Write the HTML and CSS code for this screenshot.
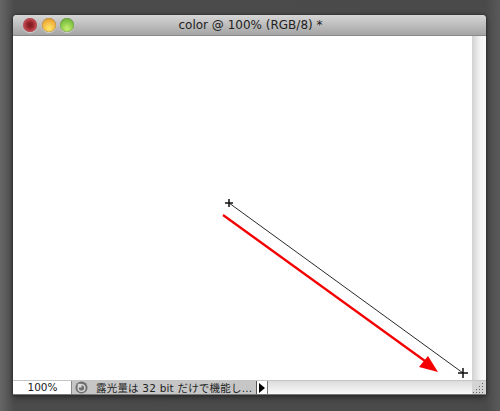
FILE: index.html
```html
<!DOCTYPE html>
<html lang="ja">
<head>
    <meta charset="UTF-8">
    <meta name="viewport" content="width=device-width, initial-scale=1.0">
    <title>color @ 100% (RGB/8) *</title>
    <link rel="stylesheet" href="styles.css">
</head>
<body>

<div class="window">
    <div class="titlebar">
        <div class="lights">
            <span class="light red"></span>
            <span class="light yellow"></span>
            <span class="light green"></span>
        </div>
        <div class="title">color @ 100% (RGB/8) *</div>
    </div>

    <div class="main">
        <svg class="canvas" width="459" height="344" viewBox="13 36 459 344">
            <!-- thin path with the two cursors -->
            <line x1="229" y1="203" x2="463" y2="373" stroke="#111" stroke-width="0.9"/>
            <path d="M229 199V207M225 203H233" stroke="#111" stroke-width="1.5" fill="none"/>
            <path d="M463 368V378M458 373H468" stroke="#111" stroke-width="1.5" fill="none"/>
            <!-- red arrow -->
            <line x1="223" y1="215" x2="425" y2="361" stroke="#f40000" stroke-width="2.2"/>
            <polygon points="438,372 419,367 428,356" fill="#f40000"/>
        </svg>
        <div class="scroll-strip"></div>
    </div>

    <div class="statusbar">
        <div class="zoom">100%</div>
        <div class="info">
            <svg class="info-icon" width="14" height="14" viewBox="0 0 14 14">
                <circle cx="7" cy="7" r="6.5" fill="#6f6f6f"/>
                <circle cx="7" cy="7.5" r="3.6" fill="none" stroke="#d8d8d8" stroke-width="1.5"/>
                <path d="M3 3H7V7H3z" fill="#d8d8d8"/>
            </svg>
            <span class="info-text">露光量は 32 bit だけで機能し...</span>
        </div>
        <div class="arrow-btn"><span class="arrow"></span></div>
        <div class="hscroll"></div>
        <svg class="grip" width="14" height="13" viewBox="0 0 14 13">
            <path d="M10 2h1v1h-1zM7 5h1v1h-1zM10 5h1v1h-1zM4 8h1v1h-1zM7 8h1v1h-1zM10 8h1v1h-1zM1 11h1v1h-1zM4 11h1v1h-1zM7 11h1v1h-1zM10 11h1v1h-1z" fill="#666"/>
        </svg>
    </div>
</div>

</body>
</html>
```

FILE: styles.css
```css
html, body {
    margin: 0;
    height: 100%;
}

body {
    width: 500px;
    height: 411px;
    overflow: hidden;
    padding: 15px 14px 0 13px;
    box-sizing: border-box;
    background: linear-gradient(to right, #666 0, #4b4b4b 14px, #4a4a4a 486px, #5a5a5a 500px);
    font-family: "DejaVu Sans", "Noto Sans CJK JP", sans-serif;
}

.window {
    width: 473px;
    height: 380px;
    display: flex;
    flex-direction: column;
    box-shadow: 0 0 3px #222, 0 3px 6px rgba(0, 0, 0, 0.35);
    border-radius: 4px 4px 0 0;
    background: #fff;
}

.titlebar {
    height: 20px;
    flex: none;
    display: flex;
    align-items: center;
    border-radius: 4px 4px 0 0;
    background: linear-gradient(to bottom, #d6d6d6, #a4a4a4);
    border-bottom: 1px solid #8a8a8a;
}

.lights {
    display: flex;
    gap: 4.5px;
    padding-left: 10px;
}

.light {
    width: 14px;
    height: 14px;
    border-radius: 50%;
    box-shadow: 0 1px 1px rgba(255, 255, 255, 0.5), inset 0 0 1px rgba(0, 0, 0, 0.5);
}

.red {
    background: radial-gradient(circle at 50% 50%, #7e1a20 0, #93242c 30%, #ea666c 85%);
}

.yellow {
    background: radial-gradient(circle at 50% 75%, #ffe868 0, #f2b440 55%, #cf8e2e 100%);
}

.green {
    background: radial-gradient(circle at 50% 75%, #c8ee70 0, #86c648 55%, #60a036 100%);
}

.title {
    flex: 1;
    padding-right: 59px;
    text-align: center;
    font-size: 12px;
    color: #222;
}

.main {
    flex: 1;
    display: flex;
    min-height: 0;
}

.canvas {
    display: block;
    flex: none;
}

.scroll-strip {
    flex: 1;
    background: linear-gradient(to right, #d2d2d2, #f4f4f4 60%, #fafafa);
}

.statusbar {
    height: 15px;
    flex: none;
    display: flex;
    font-size: 10.5px;
    color: #222;
    border-top: 1px solid #c4c4c4;
    border-bottom: 1px solid #777;
    box-sizing: border-box;
    background: #fff;
}

.zoom {
    width: 59px;
    padding-left: 1px;
    text-align: center;
    line-height: 13px;
    border-right: 1px solid #888;
    box-sizing: border-box;
}

.info {
    width: 184px;
    display: flex;
    align-items: center;
    padding-left: 3px;
    box-sizing: border-box;
    background: #c6c6c6;
}

.info-icon {
    flex: none;
    width: 13px;
    height: 13px;
}

.info-text {
    margin-left: 8px;
    letter-spacing: 0.2px;
    white-space: nowrap;
}

.arrow-btn {
    width: 12px;
    display: flex;
    align-items: center;
    justify-content: center;
    background: #fff;
    border-left: 1px solid #555;
    border-right: 1px solid #777;
    box-sizing: border-box;
}

.arrow {
    border-left: 6px solid #000;
    border-top: 5px solid transparent;
    border-bottom: 5px solid transparent;
}

.hscroll {
    flex: 1;
    background: linear-gradient(to bottom, #dcdcdc, #fafafa);
}

.grip {
    flex: none;
    background: #d4d4d4;
}
```
